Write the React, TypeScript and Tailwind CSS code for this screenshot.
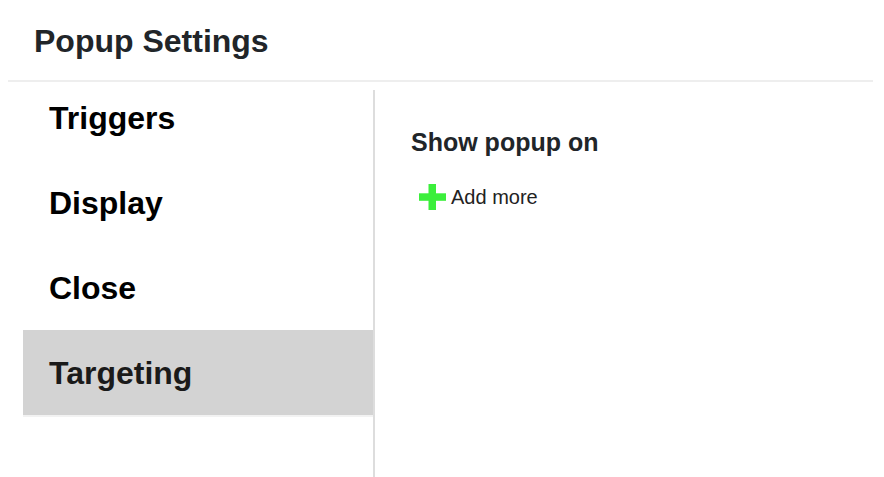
import { useState } from "react";

const tabs = ["Triggers", "Display", "Close", "Targeting"];

function PlusIcon() {
  return (
    <svg width="27" height="26" viewBox="0 0 27 26" className="shrink-0">
      <rect x="9.5" y="0" width="7.5" height="26" fill="#3bef3b" />
      <rect x="0" y="9.3" width="27" height="7.5" fill="#3bef3b" />
    </svg>
  );
}

export default function App() {
  const [active, setActive] = useState("Targeting");

  return (
    <div className="h-[477px] w-[884px] overflow-hidden bg-white font-['Liberation_Sans',Arial,sans-serif]">
      {/* Header */}
      <div className="ml-2 mr-[11px] h-[82px] border-b-2 border-[#eeeeee]">
        <h1 className="pl-[26px] pt-[21px] text-[32px] font-bold leading-[40px] text-[#212529]">
          Popup Settings
        </h1>
      </div>

      {/* Body */}
      <div className="flex">
        <div className="ml-[23px] mt-2 h-[400px] w-[352px] border-r-2 border-[#dddddd]">
          <ul className="-mt-[15px]">
            {tabs.map((t) => (
              <li
                key={t}
                onClick={() => setActive(t)}
                className={`flex h-[85px] cursor-pointer items-center pl-[26px] text-[32px] font-bold ${
                  active === t
                    ? "bg-[#d3d3d3] text-[#1a1a1a] shadow-[0_2px_0_#f2f2f2]"
                    : "text-black"
                }`}
              >
                {t}
              </li>
            ))}
          </ul>
        </div>

        <div className="flex-1 pl-9 pt-[45px]">
          <h2 className="text-[25px] font-bold leading-[30px] text-[#212529]">Show popup on</h2>
          <button className="mt-[27px] ml-2 flex items-center gap-[5px] text-[20px] leading-[26px] text-[#222222]">
            <PlusIcon />
            Add more
          </button>
        </div>
      </div>
    </div>
  );
}
